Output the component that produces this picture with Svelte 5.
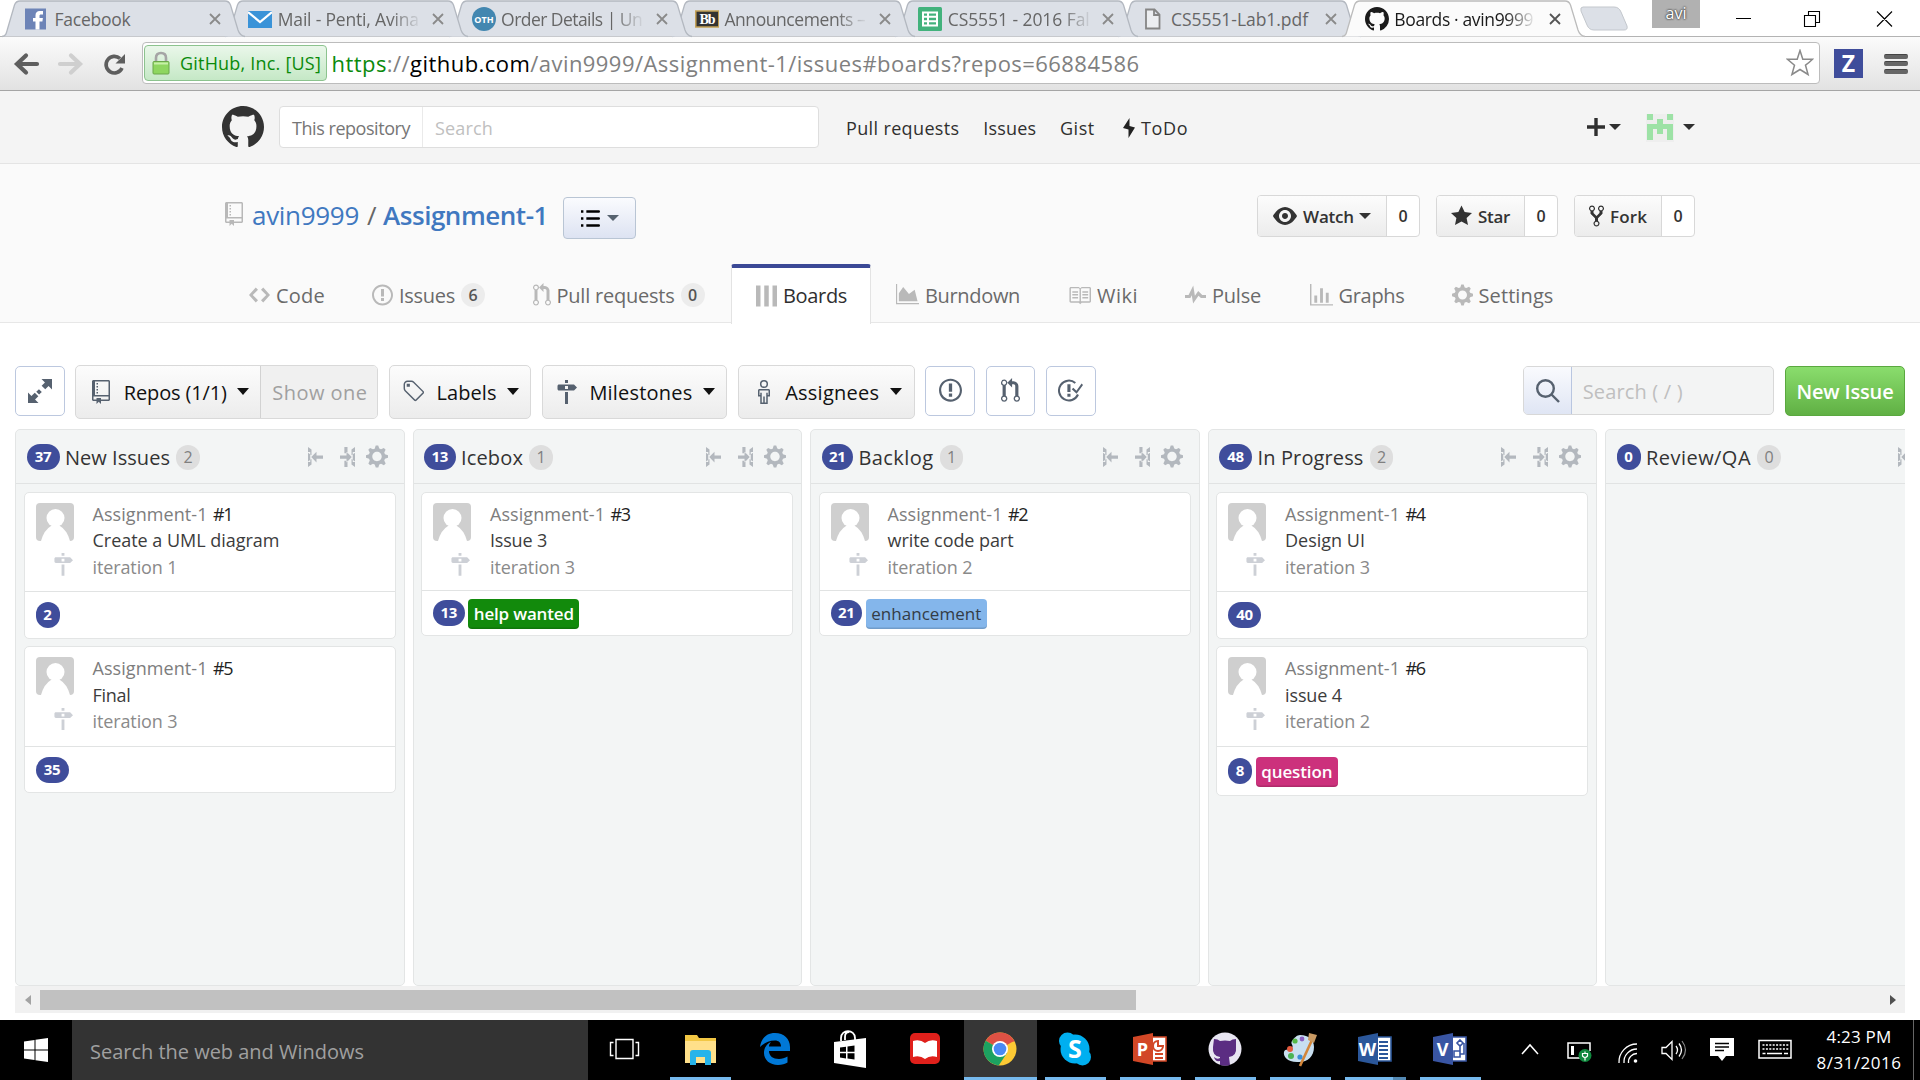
<script lang="ts">
  // Tracks a text run so that it fills the given width exactly.
  function fit(node: HTMLElement, width: number) {
    const n = (node.textContent ?? '').length;
    const natural = node.getBoundingClientRect().width;
    node.style.letterSpacing = (width - natural) / n + 'px';
  }

  // Story-point pills: one digit is round, and a "1" takes less room.
  const pillWidth = (p: number) => (p < 10 ? 24 : String(p).includes('1') ? 31.5 : 33);

  const icons: Record<string, [number, string]> = {
    github: [16, 'M8 0C3.58 0 0 3.58 0 8c0 3.54 2.29 6.53 5.47 7.59.4.07.55-.17.55-.38 0-.19-.01-.82-.01-1.49-2.01.37-2.53-.49-2.69-.94-.09-.23-.48-.94-.82-1.13-.28-.15-.68-.52-.01-.53.63-.01 1.08.58 1.23.82.72 1.21 1.87.87 2.33.66.07-.52.28-.87.51-1.07-1.78-.2-3.64-.89-3.64-3.95 0-.87.31-1.59.82-2.15-.08-.2-.36-1.02.08-2.12 0 0 .67-.21 2.2.82.64-.18 1.32-.27 2-.27.68 0 1.36.09 2 .27 1.53-1.04 2.2-.82 2.2-.82.44 1.1.16 1.92.08 2.12.51.56.82 1.27.82 2.15 0 3.07-1.87 3.75-3.65 3.95.29.25.54.73.54 1.48 0 1.07-.01 1.93-.01 2.2 0 .21.15.46.55.38A8.013 8.013 0 0 0 16 8c0-4.42-3.58-8-8-8z'],
    repo: [12, 'M4 9H3V8h1v1zm0-3H3v1h1V6zm0-2H3v1h1V4zm0-2H3v1h1V2zm8-1v12c0 .55-.45 1-1 1H6v2l-1.5-1.5L3 16v-2H1c-.55 0-1-.45-1-1V1c0-.55.45-1 1-1h10c.55 0 1 .45 1 1zm-1 10H1v2h2v-1h3v1h5v-2zm0-10H2v9h9V1z'],
    code: [14, 'M9.5 3L8 4.5 11.5 8 8 11.5 9.5 13 14 8 9.5 3zm-5 0L0 8l4.5 5L6 11.5 2.5 8 6 4.5 4.5 3z'],
    issue: [14, 'M7 2.3c3.14 0 5.7 2.56 5.7 5.7s-2.56 5.7-5.7 5.7A5.71 5.71 0 0 1 1.3 8c0-3.14 2.56-5.7 5.7-5.7zM7 1C3.14 1 0 4.14 0 8s3.14 7 7 7 7-3.14 7-7-3.14-7-7-7zm1 3H6v5h2V4zm0 6H6v2h2v-2z'],
    pull: [12, 'M11 11.28V5c-.03-.78-.34-1.47-.94-2.06C9.46 2.35 8.78 2.03 8 2H7V0L4 3l3 3V4h1c.27.02.48.11.69.31.21.2.3.42.31.69v6.28A1.993 1.993 0 0 0 10 15a1.993 1.993 0 0 0 1-3.72zm-1 2.92c-.66 0-1.2-.55-1.2-1.2 0-.65.55-1.2 1.2-1.2.65 0 1.2.55 1.2 1.2 0 .65-.55 1.2-1.2 1.2zM4 3c0-1.11-.89-2-2-2a1.993 1.993 0 0 0-1 3.72v6.56A1.993 1.993 0 0 0 2 15a1.993 1.993 0 0 0 1-3.72V4.72c.59-.34 1-.98 1-1.72zm-.8 10c0 .66-.55 1.2-1.2 1.2-.65 0-1.2-.55-1.2-1.2 0-.65.55-1.2 1.2-1.2.65 0 1.2.55 1.2 1.2zM2 4.2C1.34 4.2.8 3.65.8 3c0-.65.55-1.2 1.2-1.2.65 0 1.2.55 1.2 1.2 0 .65-.55 1.2-1.2 1.2z'],
    boards: [14, 'M0 1h3v14H0zM5.5 1h3v14h-3zM11 1h3v14h-3z'],
    burndown: [16, 'M0 0h.8v13.2H16v.9H0zM2 12V6.5L5 2l4 5 4-3 2 8z'],
    book: [16, 'M3 5h4v1H3V5zm0 3h4V7H3v1zm0 2h4V9H3v1zm11-5h-4v1h4V5zm0 2h-4v1h4V7zm0 2h-4v1h4V9zm2-6v9c0 .55-.45 1-1 1H9.5l-1 1-1-1H2c-.55 0-1-.45-1-1V3c0-.55.45-1 1-1h5.5l1 1 1-1H15c.55 0 1 .45 1 1zm-8 .5L7.5 3H2v9h6V3.5zm7-.5H9.5l-.5.5V12h6V3z'],
    pulse: [14, 'M11.5 8L8.8 5.4 6.6 8.5 5.5 1.6 2.38 8H0v2h3.6l.9-1.8.9 5.4L9 8.5l1.6 1.5H14V8h-2.5z'],
    graph: [16, 'M16 14v1H0V0h1v14h15zM5 13H3V8h2v5zm4 0H7V3h2v10zm4 0h-2V6h2v7z'],
    gear: [14, 'M14 8.77v-1.6l-1.94-.64-.45-1.09.88-1.84-1.13-1.13-1.81.91-1.09-.45-.69-1.92h-1.6l-.63 1.94-1.11.45-1.84-.88-1.13 1.13.91 1.81-.45 1.09L0 7.23v1.59l1.94.64.45 1.09-.88 1.84 1.13 1.13 1.81-.91 1.09.45.69 1.92h1.59l.63-1.94 1.11-.45 1.84.88 1.13-1.13-.92-1.81.47-1.09L14 8.75v.02zM7 11c-1.66 0-3-1.34-3-3s1.34-3 3-3 3 1.34 3 3-1.34 3-3 3z'],
    eye: [16, 'M8.06 2C3 2 0 8 0 8s3 6 8.06 6C13 14 16 8 16 8s-3-6-7.94-6zM8 12c-2.2 0-4-1.78-4-4 0-2.2 1.8-4 4-4 2.22 0 4 1.8 4 4 0 2.22-1.78 4-4 4zm2-4c0 1.11-.89 2-2 2-1.11 0-2-.89-2-2 0-1.11.89-2 2-2 1.11 0 2 .89 2 2z'],
    star: [14, 'M14 6l-4.9-.64L7 1 4.9 5.36 0 6l3.6 3.26L2.67 14 7 11.67 11.33 14l-.93-4.74z'],
    fork: [10, 'M8 1a1.993 1.993 0 0 0-1 3.72V6L5 8 3 6V4.72A1.993 1.993 0 0 0 2 1a1.993 1.993 0 0 0-1 3.72V6.5l3 3v1.78A1.993 1.993 0 0 0 5 15a1.993 1.993 0 0 0 1-3.72V9.5l3-3V4.72A1.993 1.993 0 0 0 8 1zM2 4.2C1.34 4.2.8 3.65.8 3c0-.65.55-1.2 1.2-1.2.65 0 1.2.55 1.2 1.2 0 .65-.55 1.2-1.2 1.2zm3 10c-.66 0-1.2-.55-1.2-1.2 0-.65.55-1.2 1.2-1.2.65 0 1.2.55 1.2 1.2 0 .65-.55 1.2-1.2 1.2zm3-10c-.66 0-1.2-.55-1.2-1.2 0-.65.55-1.2 1.2-1.2.65 0 1.2.55 1.2 1.2 0 .65-.55 1.2-1.2 1.2z'],
    milestone: [14, 'M8 2H6V0h2v2zm4 5H2c-.55 0-1-.45-1-1V4c0-.55.45-1 1-1h10l2 2-2 2zM8 4H6v2h2V4zM6 16h2V8H6v8z'],
    tag: [14, 'M7.73 1.73C7.26 1.26 6.62 1 5.96 1H3.5C2.13 1 1 2.13 1 3.5v2.47c0 .66.27 1.3.73 1.77l6.06 6.06c.39.39 1.02.39 1.41 0l4.59-4.59a.996.996 0 0 0 0-1.41L7.73 1.73zM2.38 7.09c-.31-.3-.47-.7-.47-1.13V3.5c0-.88.72-1.59 1.59-1.59h2.47c.42 0 .83.16 1.13.47l6.14 6.13-4.73 4.73-6.13-6.15zM3.01 3h2v2H3V3h.01z'],
    person: [8, 'M4 0a2.7 2.7 0 1 0 0 5.4A2.7 2.7 0 0 0 4 0zm0 1a1.7 1.7 0 1 1 0 3.4A1.7 1.7 0 0 1 4 1zM1 6C.4 6 0 6.4 0 7v4h1.5v5h5v-5H8V7c0-.6-.4-1-1-1zm0 1h6v3H6.5V8.5h-1V15h-1v-4h-1v4h-1V8.5h-1V10H1z'],
    expand: [16, 'M9 0h7v7l-2.3-2.3-2.2 2.2-2.4-2.4 2.2-2.2zM7 16H0V9l2.3 2.3 2.2-2.2 2.4 2.4-2.2 2.2zM7.3 6.8l1.9 1.9-1.8 1.7-1.9-1.9z'],
    list: [16, 'M0 1h2v2.2H0zM4.5 1H15q1 0 1 1.100T15 3.200H4.500zM0 6.900h2v2.200H0zM4.500 6.900H15q1 0 1 1.100t-1 1.100H4.500zM0 12.800h2V15H0zM4.500 12.800H15q1 0 1 1.100T15 15H4.500z'],
    toLeft: [12, 'M0 0l2.800 2v4.500L0 4.500zM0 16l2.800-2V9.500L0 11.500zM0 4h1.800v8H0zM2.600 8L6.800 3.700v3H12v2.600H6.800v3z'],
    toMid: [12, 'M3.500 0H6v5H3.500zM3.500 11H6v5H3.500zM12 0L9.200 2v4.500L12 4.500zM12 16l-2.800-2V9.500l2.800 2zM10.200 4H12v8h-1.800zM9.400 8L5.200 3.700v3H0v2.600h5.200v3z'],
    check: [16, 'M13.400 10.850A7 7 0 1 1 11.500 2.640L10.660 3.630A5.700 5.700 0 1 0 12.200 10.300zM8 4H6v5h2zM8 10H6v2h2zM8.800 7.200l1-1 2 1.900L15.100 3.500l.9.900-4.100 5.700z']
  };

  const browserTabs = [
    { kind: 'fb', title: 'Facebook', w: 76 },
    { kind: 'mail', title: 'Mail - Penti, Avina', w: 141, fade: true },
    { kind: 'oth', title: 'Order Details | Un', w: 141, fade: true },
    { kind: 'bb', title: 'Announcements –', w: 141, fade: true },
    { kind: 'sheet', title: 'CS5551 - 2016 Fal', w: 142, fade: true },
    { kind: 'doc', title: 'CS5551-Lab1.pdf', w: 137 },
    { kind: 'gh', title: 'Boards · avin9999', w: 139, fade: true, active: true }
  ];

  // gap: space ahead of the tab, iw: icon width, w: label width
  const repoTabs = [
    { icon: 'code', iw: 21, label: 'Code', w: 49, gap: 249 },
    { icon: 'issue', iw: 21, label: 'Issues', w: 56, gap: 47, count: 6 },
    { icon: 'pull', iw: 18, label: 'Pull requests', w: 118, gap: 47.5, count: 0 },
    { icon: 'boards', iw: 21, label: 'Boards', w: 64, gap: 26.5, active: true },
    { icon: 'burndown', iw: 23, label: 'Burndown', w: 95, gap: 25 },
    { icon: 'book', iw: 23, label: 'Wiki', w: 41, gap: 48 },
    { icon: 'pulse', iw: 21, label: 'Pulse', w: 49, gap: 47 },
    { icon: 'graph', iw: 23, label: 'Graphs', w: 66, gap: 48.500 },
    { icon: 'gear', iw: 21, label: 'Settings', w: 75, gap: 47 }
  ];

  const social = [
    { icon: 'eye', iw: 24, label: 'Watch', w: 51, bw: 129, caret: true },
    { icon: 'star', iw: 21, label: 'Star', w: 32, bw: 88 },
    { icon: 'fork', iw: 15, label: 'Fork', w: 37, bw: 87 }
  ];

  const filters = [
    { icon: 'tag', iw: 22, pad: 12, label: 'Labels', lx: 48, w: 60, bw: 142 },
    { icon: 'milestone', iw: 21, pad: 13, label: 'Milestones', lx: 48, w: 103, bw: 185 },
    { icon: 'person', iw: 12, pad: 19, label: 'Assignees', lx: 48, w: 94, bw: 177 }
  ];

  const columns = [
    { pts: 37, name: 'New Issues', w: 105, count: 2, cards: [
      { n: 1, title: 'Create a UML diagram', w: 187, it: 1, pts: 2, head: 99, foot: 46 },
      { n: 5, title: 'Final', w: 38, it: 3, pts: 35, head: 99.5, foot: 45.5 }] },
    { pts: 13, name: 'Icebox', w: 62, count: 1, cards: [
      { n: 3, title: 'Issue 3', w: 57, it: 3, pts: 13, head: 98, foot: 44.5, tag: 'help wanted', cls: 'help', tw: 100 }] },
    { pts: 21, name: 'Backlog', w: 75, count: 1, cards: [
      { n: 2, title: 'write code part', w: 126, it: 2, pts: 21, head: 98, foot: 44.5, tag: 'enhancement', cls: 'enh', tw: 110 }] },
    { pts: 48, name: 'In Progress', w: 106, count: 2, cards: [
      { n: 4, title: 'Design UI', w: 80, it: 3, pts: 40, head: 99, foot: 46 },
      { n: 6, title: 'issue 4', w: 57, it: 2, pts: 8, head: 99.5, foot: 48, tag: 'question', cls: 'ques', tw: 71 }] },
    { pts: 0, name: 'Review/QA', w: 105, count: 0, cards: [] }
  ];

  const apps = ['view', 'folder', 'edge', 'store', 'read', 'chrome', 'skype', 'ppt', 'ghd', 'paint', 'word', 'visio'];
  const office: Record<string, [string, string]> = { ppt: ['P', '#d24726'], word: ['W', '#2b579a'], visio: ['V', '#3955a3'] };
</script>

{#snippet icon(name: string, width: number)}
  <svg class="ico" {width} height={(width / icons[name][0]) * 16} viewBox="0 0 {icons[name][0]} 16"><path d={icons[name][1]} fill-rule="evenodd" /></svg>
{/snippet}

{#snippet caret()}<i class="caret"></i>{/snippet}

{#snippet favicon(kind: string)}
  {#if kind === 'gh'}
    {@render icon('github', 24)}
  {:else}
    <svg class="ico" width="24" height="24" viewBox="0 0 24 24">
      {#if kind === 'fb'}
        <rect x="0" y="1.5" width="21" height="21" fill="#6d84b7" /><path d="M10.500 22.500v-8H8v-3.500h2.500V8.500C10.500 5.500 12 4 14.800 4H18v3.500h-2c-1.200 0-1.500.500-1.500 1.500v2h3.400l-.5 3.500h-2.900v8z" fill="#fff" />
      {:else if kind === 'mail'}
        <rect x="0" y="4" width="24" height="17" fill="#3a93d8" /><path d="M0 5l12 10L24 5" fill="none" stroke="#fff" stroke-width="2.2" />
      {:else if kind === 'oth'}
        <circle cx="12" cy="12" r="12" fill="#4387b0" /><text x="12" y="15.5" text-anchor="middle" class="svgt" font-size="9" font-weight="700" fill="#fff">OTH</text>
      {:else if kind === 'bb'}
        <rect x=".8" y="4" width="23" height="16" fill="#333" stroke="#c4a155" stroke-width="1.5" /><text x="12" y="17" text-anchor="middle" class="serift" font-size="14" font-weight="700" fill="#fff">Bb</text>
      {:else if kind === 'sheet'}
        <rect width="24" height="24" rx="1.5" fill="#42b27c" /><path d="M5 5.500h14v13H5zM5 9.800h14M5 14.200h14M10 5.500v13" fill="none" stroke="#fff" stroke-width="2" />
      {:else}
        <path d="M5 2.500h8.500l5 5v14H5zM13 2.500v5.500h5.500" fill="#eceef1" stroke="#858585" stroke-width="1.8" />
      {/if}
    </svg>
  {/if}
{/snippet}

{#snippet appIcon(k: string)}
  <svg class="appico" width="40" height="40" viewBox="0 0 40 40">
    {#if k === 'view'}
      <path d="M11 10.500h17v19H11zM8.500 13.500H5.500v13h3M30.500 13.500h3v13h-3" fill="none" stroke="#fff" stroke-width="1.4" />
    {:else if k === 'folder'}
      <path d="M5 6h12l2 3h17v25H5z" fill="#f2c744" /><path d="M5 12h31v22H5z" fill="#ffe08a" /><path d="M10 36V24q0-3 3-3h15q3 0 3 3v12h-6v-8h-9v8z" fill="#27b4ea" />
    {:else if k === 'edge'}
      <path d="M5 18C6 9 12 4 20 4c9 0 15 6 15 14v4H14c0 5 4 8 10 8 3 0 6-1 8.500-2.500v6C30 35 27 36 23 36c-8 0-14-5-14-12 0-5 2.500-9 7-11-1.500 1.500-2 3-2 4.500h12c0-4-2.500-6-6-6-6 0-11 2.500-15 6.500z" fill="#0078d7" />
    {:else if k === 'store'}
      <path d="M4 13l32-4v30L4 34z" fill="#fff" /><path d="M11 12V9c0-9 14-9 14 0v2M15 11V8c0-4 2-5 4-5" fill="none" stroke="#fff" stroke-width="1.8" /><path d="M10 18.500l6-.7v5H10zM17.500 17.500l7-1v6.300h-7zM10 24.300h6v5.200l-6-1zM17.500 24.300h7v6.300l-7-1z" fill="#000" />
    {:else if k === 'read'}
      <rect x="5" y="4" width="30" height="31" rx="5" fill="#e0201b" /><path d="M8 12q7-2 12 2 5-4 12-2v16q-7-2-12 2-5-4-12-2z" fill="#fff" />
    {:else if k === 'chrome'}
      <circle cx="20" cy="20" r="16.5" fill="#fcc934" /><path d="M20 20L5.700 11.700a16.500 16.500 0 0 1 28.600 0z" fill="#dd5144" /><path d="M20 20L5.700 11.700a16.500 16.500 0 0 0 13 24.700L27 24z" fill="#1ca261" /><path d="M20 12.500h14.700L34.300 11.700 20 9z" fill="#dd5144" /><circle cx="20" cy="20" r="8" fill="#fff" /><circle cx="20" cy="20" r="6.3" fill="#4a8af4" />
    {:else if k === 'skype'}
      <circle cx="20" cy="20" r="14.5" fill="#00aff0" /><circle cx="12.5" cy="12" r="8.5" fill="#00aff0" /><circle cx="27.5" cy="28" r="8.5" fill="#00aff0" /><text x="20" y="29" text-anchor="middle" class="svgt" font-size="25" font-weight="700" fill="#fff">S</text>
    {:else if office[k]}
      <path d="M21 8h15v24H21z" fill="#fff" stroke={office[k][1]} stroke-width="1.6" />
      {#if k === 'word'}<path d="M24 13h9M24 17h9M24 21h9M24 25h9M24 29h9" stroke={office[k][1]} stroke-width="1.8" />
      {:else if k === 'ppt'}<path d="M28 12v5h5a5 5 0 1 1-5-5zM25 25h8M25 29h8" fill="none" stroke={office[k][1]} stroke-width="2" />
      {:else}<path d="M30 11l3 3-3 3-3-3zM30 17v5M24 22h6v6h-6zM30 25h4v-11" fill="none" stroke={office[k][1]} stroke-width="1.6" />{/if}
      <path d="M3 8l20-4v32L3 32z" fill={office[k][1]} />
      <text x="12.5" y="27" text-anchor="middle" class="svgt" font-size="18" font-weight="700" fill="#fff">{office[k][0]}</text>
    {:else if k === 'ghd'}
      <circle cx="20" cy="20" r="16.5" fill="#e8e6f2" /><path d="M9 10q4 0 6 2 5-1 10 0 2-2 6-2v8q1 9-7 10l1 8q-5 1.500-10 0v-4q-5 1-6-4 3 3 6 1v-1q-8-1-7-10z" fill="#5b2d82" />
    {:else}
      <path d="M20 6c9 0 14 5 14 12 0 10-7 16-17 15C7 33 3 27 4 23s6-1 8-4-2-4 0-7 5-6 8-6z" fill="#c8dff0" /><circle cx="10" cy="20" r="3" fill="#e35a3e" /><circle cx="15" cy="12" r="2.6" fill="#57b947" /><circle cx="22" cy="10" r="2.4" fill="#8a5fc0" /><circle cx="11" cy="27" r="3" fill="#4bb454" /><circle cx="20" cy="28" r="2.6" fill="#3a8fd8" /><path d="M20 37L32 11" stroke="#d3863a" stroke-width="2.6" /><path d="M29 4l8 2-3 8-6-3z" fill="#c99a63" />
    {/if}
  </svg>
{/snippet}

<div class="screen">
  <div class="titlebar">
    {#each browserTabs as t, i}
      <div class="btab" class:on={t.active} style:z-index={t.active ? 20 : 10 - i}>
        <svg class="shape" width="244" height="37" viewBox="0 0 244 37"><path d="M-1 36.500C3 36 3.500 33 4.500 29L11.500 5Q13 1 17 1H222Q226 1 227.500 5L235 30Q237 36 242 36.500" /></svg>
        <span class="fav">{@render favicon(t.kind)}</span>
        <span class="tt"><span class="t" class:fade={t.fade} use:fit={t.w}>{t.title}</span></span>
        <svg class="x" width="12" height="12" viewBox="0 0 12 12"><path d="M1 1l10 10M11 1L1 11" /></svg>
      </div>
    {/each}
    <svg class="newtab" width="50" height="26" viewBox="0 0 50 26"><path d="M4 1h31q5 0 7 5l6 14q1 4-3 4H15q-5 0-7-5L2 5Q1 1 4 1z" /></svg>
    <div class="avi"><span>avi</span></div>
    <svg class="win" width="160" height="18" viewBox="0 0 160 18"><path d="M0 8.500h15M68.500 5.500h11v11h-11zM72.500 5V1.500h11v11H80M141 1.500l15 15M156 1.500l-15 15" /></svg>
  </div>

  <div class="navbar">
    <svg class="arrows" width="127" height="26" viewBox="0 0 127 26">
      <path d="M37 13H19M26 4.500L17 13l9 8.500" stroke="#5e5e5e" stroke-width="4.2" stroke-linecap="round" />
      <path d="M60 13h18M71 4.500l9 8.500-9 8.500" stroke="#cfcfcf" stroke-width="4.2" stroke-linecap="round" />
      <path d="M120 7.500A8.300 8.300 0 1 0 122 17" stroke="#5e5e5e" stroke-width="3.6" /><path d="M125 3v9.500h-9.500z" fill="#5e5e5e" />
    </svg>
    <div class="omni">
      <div class="secure">
        <svg width="18" height="24" viewBox="0 0 18 24"><path d="M4 12V7q0-5 5-5t5 5v5" fill="none" stroke="#a5a5a5" stroke-width="2.6" /><rect x="1" y="10.5" width="16" height="12.5" rx="1" fill="#8ed660" stroke="#6aa84a" /><path d="M2 12.500h14" stroke="#c7f0a8" stroke-width="2" /></svg>
        <span class="t ev" use:fit={141}>GitHub, Inc. [US]</span>
      </div>
      <span class="t url" use:fit={808}><b class="g">https</b>://<b>github.com</b>/avin9999/Assignment-1/issues#boards?repos=66884586</span>
      <svg class="fav-star" width="28" height="28" viewBox="0 0 28 28"><path d="M14 1.500l2.800 8.700 9.700.1q-3.500 3.500-7 5.900l2.600 9.300-8.100-5-8.100 5 2.600-9.300-7-5.900 9.700-.1z" /></svg>
    </div>
    <div class="zen"><span>Z</span></div>
    <div class="burger"><i></i><i></i><i></i></div>
  </div>

  <header class="ghead">
    <span class="mark">{@render icon('github', 42)}</span>
    <div class="hsearch"><div class="scope"><span class="t" use:fit={118}>This repository</span></div><span class="t ph" use:fit={58}>Search</span></div>
    <nav>
      <span class="t" use:fit={113.5}>Pull requests</span><span class="t" use:fit={53}>Issues</span><span class="t" use:fit={35}>Gist</span>
      <svg width="12" height="20" viewBox="0 0 12 20"><path d="M6.500 0v8L12 9.500 5.500 20V11.500L0 10z" /></svg><span class="t todo" use:fit={47}>ToDo</span>
    </nav>
    <div class="user">
      <svg width="18" height="18" viewBox="0 0 18 18"><path d="M7.300 0h3.400v7.300H18v3.400h-7.300V18H7.300v-7.300H0V7.300h7.300z" /></svg>{@render caret()}
      <svg class="ident" width="28" height="28" viewBox="0 0 28 28"><rect width="28" height="28" fill="#eee" /><path d="M1 0h6v6H1zM21 0h6v6h-6zM11 5h6v5h10v16h-6V15h-4v5h-6v-5H7v11H1V10h10z" fill="#9de2a6" /></svg>{@render caret()}
    </div>
  </header>

  <section class="repohead">
    <div class="title">
      <span class="book">{@render icon('repo', 18)}</span>
      <span class="t lnk" use:fit={107}>avin9999</span><span class="slash">/</span><span class="t lnk strong" use:fit={165}>Assignment-1</span>
      <div class="listbtn">{@render icon('list', 19)}{@render caret()}</div>
      <div class="social">
        {#each social as s}
          <div class="sb"><div class="main" style:width="{s.bw}px">{@render icon(s.icon, s.iw)}<span class="t" use:fit={s.w}>{s.label}</span>{#if s.caret}{@render caret()}{/if}</div><div class="cnt">0</div></div>
        {/each}
      </div>
    </div>
    <div class="rtabs">
      {#each repoTabs as t}
        <div class="rtab" class:on={t.active} style:margin-left="{t.gap}px">
          {@render icon(t.icon, t.iw)}<span class="t" use:fit={t.w}>{t.label}</span>{#if t.count !== undefined}<span class="n">{t.count}</span>{/if}
        </div>
      {/each}
    </div>
  </section>

  <div class="tools">
    <div class="sq">{@render icon('expand', 24)}</div>
    <div class="btn repos"><div class="r1">{@render icon('repo', 18)}<span class="t" use:fit={103}>Repos (1/1)</span>{@render caret()}</div><div class="r2"><span class="t" use:fit={95}>Show one</span></div></div>
    {#each filters as f}
      <div class="btn" style:width="{f.bw}px" style:padding-left="{f.pad}px">
        <span class="fi" style:width="{f.lx - f.pad - 1.5}px">{@render icon(f.icon, f.iw)}</span><span class="t" use:fit={f.w}>{f.label}</span>{@render caret()}
      </div>
    {/each}
    <div class="sq">{@render icon('issue', 23)}</div>
    <div class="sq">{@render icon('pull', 19)}</div>
    <div class="sq">{@render icon('check', 25)}</div>
    <div class="find">
      <div class="mag"><svg width="26" height="26" viewBox="0 0 26 26"><circle cx="10.5" cy="10.5" r="8.3" /><path d="M16.500 16.500l7.500 7.500" /></svg></div>
      <span class="t" use:fit={100}>Search ( / )</span>
    </div>
    <div class="new"><span class="t" use:fit={97}>New Issue</span></div>
  </div>

  <div class="board">
    {#each columns as c}
      <div class="col">
        <div class="ch">
          <span class="pill" style:width="{pillWidth(c.pts)}px">{c.pts}</span><span class="t name" use:fit={c.w}>{c.name}</span><span class="gray">{c.count}</span>
          <span class="acts">{@render icon('toLeft', 15)}{@render icon('toMid', 15)}{@render icon('gear', 22)}</span>
        </div>
        {#each c.cards as k}
          <div class="card">
            <div class="top" style:height="{k.head}px">
              <div class="side">
                <svg width="38" height="38" viewBox="0 0 38 38"><rect width="38" height="38" rx="4" fill="#cfcfcf" /><circle cx="19.5" cy="15" r="9" fill="#fff" /><path d="M5 38q3-11 10-15h9q7 4 10 15z" fill="#fff" /></svg>
                {@render icon('milestone', 20)}
              </div>
              <div class="lines">
                <div><span class="t rn" use:fit={115}>Assignment-1</span><span class="t num" use:fit={19}>#{k.n}</span></div>
                <div><span class="t ttl" use:fit={k.w}>{k.title}</span></div>
                <div><span class="t it" use:fit={85}>iteration {k.it}</span></div>
              </div>
            </div>
            <div class="foot" style:height="{k.foot}px">
              <span class="pill" style:width="{pillWidth(k.pts)}px">{k.pts}</span>{#if k.tag}<span class="tag {k.cls}"><span class="t" use:fit={k.tw}>{k.tag}</span></span>{/if}
            </div>
          </div>
        {/each}
      </div>
    {/each}
  </div>
  <div class="scroll"><i class="l"></i><div class="thumb"></div><i class="r"></i></div>

  <div class="taskbar">
    <div class="start"><svg width="24" height="24" viewBox="0 0 24 24"><path d="M0 3.500L10.500 2v9.500H0zM11.500 1.800L24 0v11.500H11.500zM0 12.500h10.500V22L0 20.500zM11.500 12.500H24V24l-12.500-1.800z" fill="#fff" /></svg></div>
    <div class="cortana"><span class="t" use:fit={274}>Search the web and Windows</span></div>
    {#each apps as a, i}
      <div class="app" class:open={i === 1 || i > 4} class:cur={a === 'chrome'} class:multi={a === 'word'}>{@render appIcon(a)}</div>
    {/each}
    <svg class="tray" width="276" height="32" viewBox="0 0 276 32" fill="none" stroke="#fff" stroke-width="1.5">
      <path d="M2 20l8-9 8 9" />
      <path d="M68 24H48V9h22v8" /><path d="M51 12h3v9h-3z" fill="#fff" stroke="none" /><circle cx="65" cy="21.5" r="6.5" fill="#10893e" stroke="none" /><path d="M65 17.500v2M65 23.500v3M62.500 19.500h5V22q-2.500 3-5 0z" stroke-width="1.2" />
      <g stroke-width="1.3"><path d="M99 29A18 18 0 0 1 117 10M104 29a13 13 0 0 1 13-14M108.500 29a8.500 8.500 0 0 1 8.500-9.500" /></g><circle cx="115.5" cy="27" r="1.8" fill="#fff" stroke="none" />
      <path d="M142 13.500h4l6-6v18l-6-6h-4zM156 12q3 4 0 8M159 9.500q5 6.500 0 13" stroke-width="1.3" /><path d="M162 7q7 9 0 18" stroke="#888" stroke-width="1.2" />
      <path d="M190 4h24v18h-8l-4 5-4-5h-8z" fill="#fff" stroke="none" /><path d="M195 9.500h14M195 13h14M195 16.500h9" stroke="#000" />
      <path d="M239 6.500h32v17.500h-32z" /><path d="M242.500 11h26M242.500 15h26" stroke-dasharray="2 1.400" stroke-width="1.7" /><path d="M242.500 19.500h3M247 19.500h15M264 19.500h4" stroke-width="1.7" />
    </svg>
    <div class="clock"><span class="t" use:fit={65}>4:23 PM</span><span class="t" use:fit={85}>8/31/2016</span></div>
    <i class="peek"></i>
  </div>
</div>

<style>
  :global(body) { margin: 0; overflow: hidden; background: #fff; }
  .screen { width: 1920px; height: 1080px; overflow: hidden; display: flex; flex-direction: column; font-family: 'Open Sans', 'Noto Sans', sans-serif; font-size: 18px; color: #333; background: #fff; }
  .screen :global(*) { box-sizing: border-box; }
  .t { display: inline-block; white-space: nowrap; flex: none; }
  svg { display: block; flex: none; }
  .ico { fill: currentColor; }
  .caret { flex: none; width: 0; height: 0; border: 6px solid transparent; border-top: 6.5px solid currentColor; border-bottom: 0; }
  .svgt { font-family: 'Open Sans', sans-serif; }
  .serift { font-family: 'Liberation Serif', serif; letter-spacing: -1px; }

  .titlebar { height: 37px; flex: none; display: flex; padding-left: 3px; border-bottom: 1px solid #b3b3b3; position: relative; }
  .btab { position: relative; width: 223.3px; height: 37px; flex: none; display: flex; align-items: center; padding: 0 0 0 22px; color: #666; }
  .shape { position: absolute; left: 0; top: 0; overflow: visible; }
  .shape path { fill: #dce0e7; stroke: #b3b8c0; stroke-width: 1.3; }
  .on .shape path { fill: #fbfbfb; stroke: #bcbcbc; }
  .btab.on { color: #1a1a1a; }
  .fav { position: relative; width: 29.5px; flex: none; }
  .tt { position: relative; width: 154.5px; font-size: 17.5px; line-height: 36px; flex: none; }
  .fade { -webkit-mask-image: linear-gradient(90deg, #000 80%, rgba(0, 0, 0, .1)); mask-image: linear-gradient(90deg, #000 80%, rgba(0, 0, 0, .1)); }
  .x { position: relative; stroke: #8a8a8a; stroke-width: 1.8; fill: none; }
  .on .x { stroke: #555; }
  .newtab { margin: 6px 0 0 13px; fill: #dce0e7; stroke: #c3c7cd; }
  .avi { width: 48px; height: 28px; margin-left: 23px; background: #b1b1b1; color: #fff; font-size: 16px; font-weight: 500; line-height: 26px; text-align: center; text-shadow: 0 0 2px #333, 0 0 2px #333; }
  .win { margin: 10px 0 0 36px; fill: none; stroke: #000; stroke-width: 1.1; }

  .navbar { height: 54px; flex: none; display: flex; align-items: center; background: linear-gradient(#fbfbfb, #e2e2e2); border-bottom: 1px solid #a5a5a5; }
  .arrows { fill: none; }
  .omni { margin: 0 0 1px 15px; width: 1678px; height: 42px; display: flex; align-items: center; background: #fff; border: 1.5px solid #bcbcbc; border-radius: 4px; padding-left: 1px; }
  .secure { width: 183px; height: 36px; display: flex; align-items: center; padding-left: 7px; gap: 10px; background: linear-gradient(#eaf7ea, #c5e8c6); border: 1px solid #8cc38e; border-radius: 4px; color: #0a8a0a; }
  .ev { font-size: 18px; }
  .url { margin-left: 4.5px; font-size: 22px; line-height: 36px; color: #808080; }
  .url b { font-weight: 400; color: #000; }
  .url b.g { color: #0b8a0b; }
  .fav-star { margin-left: auto; margin-right: 5px; fill: #fff; stroke: #8a8a8a; stroke-width: 1.5; }
  .zen { width: 29px; height: 29px; margin-left: 14px; background: #3f4d9b; display: grid; place-items: center; color: #fff; font: 700 23px/27px 'Open Sans', sans-serif; }
  .burger { margin-left: 21px; display: grid; gap: 2.5px; }
  .burger i { width: 24px; height: 5px; border-radius: 2px; background: #666; border-top: 1px solid #444; }

  .ghead { height: 73px; flex: none; display: flex; align-items: center; background: #f4f4f4; border-bottom: 1.5px solid #e4e4e4; }
  .mark { margin-left: 222px; color: #333; }
  .hsearch { margin-left: 15px; width: 540px; height: 42px; display: flex; align-items: center; background: #fff; border: 1.5px solid #dedede; border-radius: 4px; font-size: 18px; }
  .scope { width: 143px; height: 100%; display: flex; align-items: center; padding: 2px 0 0 12px; border-right: 1.5px solid #eaeaea; color: #767676; }
  .ph { margin: 1px 0 0 12px; color: #c0c0c0; }
  nav { display: flex; align-items: center; margin-left: 27px; padding-top: 1px; gap: 23.7px; font-size: 18px; font-weight: 500; color: #2f2f2f; }
  nav svg { margin-left: 4.5px; fill: #222; }
  .todo { margin-left: -17.7px; }
  .user { display: flex; align-items: center; margin-left: auto; padding-right: 225px; padding-bottom: 1px; color: #2f2f2f; }
  .user svg { fill: #2f2f2f; margin-right: 4px; }
  .user .ident { margin: 2px 9px 0 25px; }

  .repohead { height: 159px; flex: none; display: flex; flex-direction: column; justify-content: space-between; background: #fafafa; border-bottom: 1.5px solid #e7e7e7; }
  .title { height: 42px; margin-top: 30px; display: flex; align-items: center; font-size: 26px; position: relative; }
  .book { margin: -2px 0 0 225px; color: #b8b8b8; }
  .lnk { margin-left: 9px; color: #4078c0; line-height: 42px; margin-bottom: 1px; }
  .lnk.strong { font-weight: 600; margin-left: 5px; }
  .slash { margin: 0 0 1px 8px; width: 11px; color: #666; }
  .listbtn { margin: 5px 0 0 15px; width: 73px; height: 42px; display: flex; align-items: center; justify-content: center; gap: 7px; border: 1.5px solid #b9c5d4; border-radius: 4px; background: linear-gradient(#fafbfe, #dde3f2); color: #000; }
  .listbtn .ico { margin-top: 1px; }
  .listbtn .caret { color: #56626f; }
  .social { display: flex; gap: 16px; margin: 2px 0 0 auto; padding-right: 225px; font-size: 17px; font-weight: 600; }
  .sb { display: flex; height: 42px; border: 1.5px solid #d8d8d8; border-radius: 4px; overflow: hidden; background: #fff; }
  .main { display: flex; align-items: center; justify-content: center; gap: 6px; border-right: 1.5px solid #d8d8d8; background: linear-gradient(#fcfcfc, #ececec); }
  .main .caret { margin-left: -1px; }
  .cnt { width: 32px; line-height: 40px; text-align: center; font-size: 16px; }
  .rtabs { display: flex; align-items: flex-end; font-size: 20px; color: #6a6a6a; height: 60px; }
  .rtab { height: 57px; display: flex; align-items: center; gap: 6px; padding-top: 3px; }
  .rtab .ico { color: #b9b9b9; }
  .rtab .n { min-width: 24px; height: 24px; border-radius: 12px; background: #ececec; color: #555; font-size: 16px; font-weight: 600; line-height: 24px; text-align: center; }
  .rtab.on { height: 60px; width: 140px; margin-bottom: -1.5px; padding: 0 0 0 24px; background: #fff; border: 1.5px solid #e3e3e3; border-top: 4px solid #3b4996; border-bottom: 0; border-radius: 3px 3px 0 0; color: #2f2f2f; }

  .tools { height: 106px; flex: none; display: flex; align-items: flex-start; padding: 42px 15px 0; gap: 10.8px; }
  .sq { width: 49.5px; height: 50px; margin-top: 1px; display: grid; place-items: center; border: 1.5px solid #bcc8df; border-radius: 5px; color: #56616f; flex: none; }
  .sq .ico { margin-bottom: 1px; }
  .btn { height: 54px; flex: none; display: flex; align-items: center; border: 1.5px solid #d9d9d9; border-radius: 5px; background: linear-gradient(#fcfcfc, #ececec); font-size: 20px; font-weight: 500; color: #111; }
  .btn .ico { color: #56616f; }
  .btn .caret { margin-left: 10.5px; border-width: 7px 6px 0; margin-top: -1px; }
  .repos { width: 303px; overflow: hidden; }
  .r1 { width: 184px; height: 100%; display: flex; align-items: center; padding-left: 15.5px; }
  .r1 .t { margin-left: 14px; }
  .r2 { flex: 1; height: 100%; display: flex; align-items: center; padding-left: 11px; background: #f0f0f0; border-left: 1.5px solid #d2d2d2; color: #a0a0a0; font-weight: 400; }
  .fi { flex: none; }
  .find { margin: 1px 0 0 auto; width: 251px; height: 49px; display: flex; align-items: center; background: #f3f4f4; border: 1.5px solid #d8d8d8; border-radius: 5px; overflow: hidden; font-size: 20px; color: #bfbfbf; }
  .find .t { margin-top: 1px; }
  .mag { width: 48px; height: 49px; display: grid; place-items: center; background: linear-gradient(#fafbfe, #dfe5f4); border-right: 1.5px solid #b9c6e0; margin-right: 10.5px; }
  .mag svg { fill: none; stroke: #56616f; stroke-width: 2.4; }
  .new { width: 120px; height: 50px; margin-top: 1px; display: grid; place-items: center; border: 1.5px solid #5aa83f; border-radius: 5px; background: linear-gradient(#8add6d, #60b044); color: #fff; font-size: 20px; font-weight: 600; }

  .board { height: 557px; flex: none; margin: 0 15px; display: flex; gap: 8px; overflow: hidden; }
  .col { width: 389.5px; flex: none; background: #f3f5f5; border: 1.5px solid #e3e5e5; border-radius: 5px; }
  .ch { height: 54px; display: flex; align-items: center; padding: 1px 0 0 10.5px; border-bottom: 1.5px solid #e1e3e3; }
  .pill { height: 26px; border-radius: 13px; background: #3f4d9b; color: #fff; font-size: 15px; font-weight: 700; line-height: 25px; text-align: center; letter-spacing: -.3px; flex: none; }
  .name { margin-left: 5.5px; font-size: 20px; font-weight: 500; }
  .gray { min-width: 21px; height: 25px; margin-left: 6px; padding: 0 7.5px; border-radius: 13px; background: #dedede; color: #808080; font-size: 16px; line-height: 25px; text-align: center; letter-spacing: -.4px; flex: none; }
  .acts { margin-left: auto; display: flex; align-items: center; gap: 11px; padding-right: 15.5px; color: #b3b8be; flex: none; }
  .acts .ico:nth-child(2) { margin-left: 6px; }
  .card { margin: 7.5px; width: 372px; background: #fff; border: 1.5px solid #e3e5e5; border-radius: 5px; }
  .top { display: flex; padding: 10px 0 0 11px; border-bottom: 1.5px solid #e1e3e3; }
  .side { width: 38px; display: flex; flex-direction: column; align-items: flex-end; gap: 12.5px; color: #cdd0d6; margin-right: 19px; }
  .side .ico { margin-right: 1px; }
  .lines { font-size: 18px; line-height: 26.5px; margin-top: -1.8px; }
  .lines div { height: 26.5px; display: flex; }
  .rn { color: #7d7d7d; }
  .num { margin-left: 5.5px; font-weight: 500; color: #222; }
  .ttl { color: #3c3c3c; }
  .it { color: #8a8a8a; }
  .foot { display: flex; align-items: center; padding: 1px 0 0 11px; gap: 3.8px; }
  .tag { height: 30px; margin-top: 1.5px; padding: 0 5.5px; border-radius: 4px; font-size: 17px; font-weight: 600; line-height: 29px; color: #fff; box-shadow: inset 0 -1.5px 0 rgba(0, 0, 0, .14); }
  .help { background: #128a0c; }
  .enh { background: #84b6eb; color: #333c46; font-weight: 500; }
  .ques { background: #cc317c; }

  .scroll { height: 27px; flex: none; margin: 0 15px; display: flex; align-items: center; background: #f1f1f1; }
  .scroll i { width: 0; height: 0; border: 5px solid transparent; }
  .scroll .l { margin: 0 9px 0 10px; border-left: 0; border-right: 6px solid #a3a3a3; }
  .scroll .r { margin: 0 9px 0 auto; border-left: 6px solid #505050; border-right: 0; }
  .thumb { width: 1096px; height: 20px; background: #c1c1c1; }

  .taskbar { margin-top: 7px; height: 60px; flex: none; background: #000; display: flex; align-items: center; color: #fff; }
  .start { width: 72px; display: grid; place-items: center; }
  .cortana { width: 516px; height: 60px; background: #333; display: flex; align-items: center; padding: 2px 0 0 18px; font-size: 20px; color: #a0a0a0; flex: none; }
  .app { width: 61px; height: 60px; margin: 0 7px; display: grid; place-items: center; border-bottom: 3px solid transparent; flex: none; }
  .appico { margin-right: 1px; }
  .app.open { border-bottom-color: #76b9ed; }
  .app.cur { width: 73px; margin: 0 1px; background: #363636; }
  .app.multi { border-image: linear-gradient(90deg, #76b9ed 78%, #5489b3 78%) 1; border-left: 0; border-right: 0; border-top: 0; border-bottom-width: 3px; }
  .tray { margin-left: 32px; }
  .clock { margin-left: 18px; width: 90px; display: flex; flex-direction: column; align-items: center; font-size: 17px; line-height: 26px; }
  .peek { width: 1px; height: 60px; margin-left: auto; margin-right: 6px; background: #666; }
</style>
